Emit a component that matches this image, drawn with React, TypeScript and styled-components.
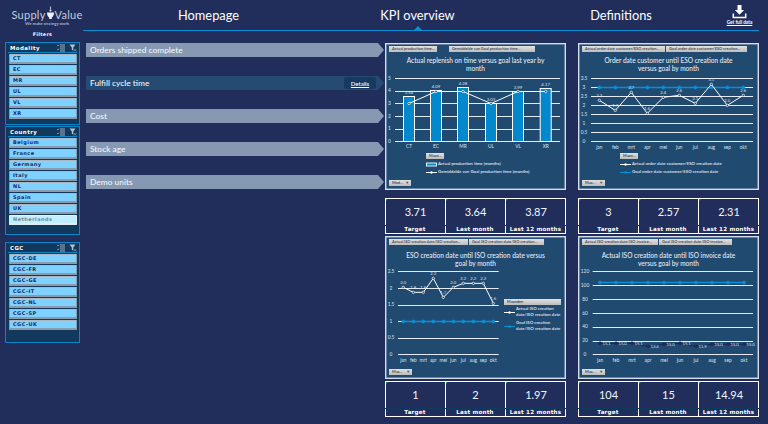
import React from "react";
import styled, { createGlobalStyle } from "styled-components";

const GlobalStyle = createGlobalStyle`
  html, body { margin: 0; padding: 0; background: #212d5a; }
  body { font-family: "Lato", "Open Sans", sans-serif; }
  * { box-sizing: border-box; }
`;

const Page = styled.div`
  width: 768px; height: 424px; overflow: hidden; display: flex; background: #212d5a;
`;
const Sidebar = styled.aside`
  width: 83px; flex: none; padding-left: 5px; display: flex; flex-direction: column;
`;
const LogoBlock = styled.div`
  height: 42px; width: 75px; display: flex; flex-direction: column; align-items: center;
`;
const LogoRow = styled.div`
  margin-top: 7px; margin-left: 9px; height: 14px; display: flex; align-items: flex-end;
  font: 400 11px/12px "Lato", sans-serif; color: #c4cede; letter-spacing: 0.25px; white-space: nowrap;
`;
const LogoTag = styled.div`
  margin-left: 9px; font: 700 4.2px/6px "Lato", sans-serif; color: #aab6cc; white-space: nowrap;
`;
const FiltersLabel = styled.div`
  margin-top: 4px; font: 700 4.8px/8px "DejaVu Sans", sans-serif; color: #fff; letter-spacing: 0.3px;
`;
const FilterPanel = styled.section<{ $mt: number; $h: number }>`
  margin-top: ${(p) => p.$mt}px; height: ${(p) => p.$h}px; width: 75px; border: 1px solid #0a86c8;
  background: #12385e; padding: 0 2px;
`;
const PanelHead = styled.div`
  height: 10px; border-bottom: 1px solid #0a86c8; display: flex; align-items: center; padding-left: 2px; gap: 4px;
`;
const PanelTitle = styled.div`
  flex: 1; font: 700 5.4px/8px "DejaVu Sans", sans-serif; color: #fff; letter-spacing: 0.45px;
`;
const ButtonList = styled.div`
  margin-top: 1px; display: flex; flex-direction: column; gap: 1px; padding: 0 0 0 1px;
`;
const SlicerButton = styled.div<{ $dim?: boolean }>`
  height: 10px; background: ${(p) => (p.$dim ? "#c3eeff" : "#7fd2ff")};
  border: 1px solid ${(p) => (p.$dim ? "#dfeef4" : "#8a9bab")}; border-top-color: ${(p) => (p.$dim ? "#e6f6fb" : "#a9b8c4")};
  border-bottom-width: 2px;
  clip-path: polygon(1px 0, calc(100% - 1px) 0, 100% 1px, 100% calc(100% - 1px), calc(100% - 1px) 100%, 1px 100%, 0 calc(100% - 1px), 0 1px);
  padding-left: 3px;
  font: 700 5px/7px "DejaVu Sans", sans-serif; letter-spacing: 0.45px;
  color: ${(p) => (p.$dim ? "#71898f" : "#1b2a58")}; white-space: nowrap;
`;
const Content = styled.main`
  flex: 1; display: flex; flex-direction: column; min-width: 0;
`;
const Nav = styled.nav`
  width: 676px; height: 31px; border-bottom: 1px solid #0a8fd6; padding-left: 21px;
  display: grid; grid-template-columns: 209px 209px 198px 1fr; position: relative;
`;
const NavItem = styled.div<{ $active?: boolean }>`
  position: relative; text-align: center; font: 400 12.8px/31px "Lato", sans-serif; color: #fff;
  ${(p) => p.$active && `
    &::after {
      content: ""; position: absolute; left: 50%; bottom: 0; margin-left: -5px;
      border-left: 5px solid transparent; border-right: 5px solid transparent; border-bottom: 5px solid #0a8fd6;
    }`}
`;
const Download = styled.div`
  display: flex; flex-direction: column; align-items: center; padding-top: 5px;
  font: 700 4.7px/6px "Lato", sans-serif; color: #fff; text-decoration: underline; white-space: nowrap;
`;
const Body = styled.div`
  margin-top: 12px; display: flex; padding-left: 3px;
`;
const Menu = styled.div`
  width: 299px; flex: none; display: flex; flex-direction: column; gap: 19px;
`;
const MenuRow = styled.div<{ $active?: boolean }>`
  width: 298px; height: 14px; display: flex; align-items: center; justify-content: space-between;
  padding: 0 8px 0 4px; background: ${(p) => (p.$active ? "#254b72" : "#8699b3")};
  clip-path: polygon(0 0, 292px 0, 100% 50%, 292px 100%, 0 100%);
  font: 500 8.4px/14px "Lato", sans-serif; color: #f1f4f8;
`;
const DetailsChip = styled.span`
  width: 32px; height: 12px; background: #183a60; border-radius: 2px; text-align: center;
  font: 500 6px/13px "Lato", sans-serif; color: #fff; text-decoration: underline;
`;
const Grid = styled.div`
  display: grid; grid-template-columns: 181px 181px; column-gap: 12px; align-content: start;
`;
const Card = styled.div<{ $gap: number }>`
  display: flex; flex-direction: column; gap: ${(p) => p.$gap}px; margin-bottom: 2px;
`;
const ChartPanel = styled.section<{ $h: number }>`
  height: ${(p) => p.$h}px; border: 1px solid #d5deea; background: #214a71; display: flex; flex-direction: column;
  box-shadow: 0 0 0 0.5px #aebfd2 inset;
`;
const ChipRow = styled.div`
  height: 6px; margin-top: 2px; padding-left: 3px; display: flex; gap: 1px;
`;
const Chip = styled.div<{ $w: number; $mr?: number }>`
  width: ${(p) => p.$w}px; margin-right: ${(p) => p.$mr ?? 0}px; height: 6px; padding-left: 3px; overflow: hidden;
  background: linear-gradient(#e2e2e2, #bdbdbd); color: #4a505e;
  font: 700 3.9px/6px "Lato", sans-serif; white-space: nowrap; flex: none;
`;
const ChartTitle = styled.h3<{ $mt: number }>`
  margin: ${(p) => p.$mt}px 0 0; height: ${(p) => 21 - p.$mt}px; text-align: center; padding: 0 8px;
  font: 500 6.55px/8px "Lato", sans-serif; color: #e6ecf4; white-space: pre-line;
`;
const PlotRow = styled.div`
  display: flex; flex: none;
`;
const Plot = styled.svg`
  display: block; flex: none;
  text { font-family: "Lato", sans-serif; fill: #dbe3ee; }
`;
const Legend = styled.div<{ $ml: number; $mt: number }>`
  margin: ${(p) => p.$mt}px 0 0 ${(p) => p.$ml}px; display: flex; flex-direction: column;
`;
const LegendRow = styled.div<{ $mt?: number }>`
  margin-top: ${(p) => p.$mt ?? 2}px; display: flex; align-items: center; gap: 1px;
  font: 600 4.4px/6px "Lato", sans-serif; color: #e3e9f1; white-space: pre-line;
`;
const FieldChip = styled.div<{ $w: number; $ml?: number; $mb?: number }>`
  flex: none; width: ${(p) => p.$w}px; height: 6px; margin-left: ${(p) => p.$ml ?? 0}px; margin-bottom: ${(p) => p.$mb ?? 0}px;
  background: linear-gradient(#e0e0e0, #bcbcbc); color: #444a58; padding: 0 2px 0 3px;
  display: flex; justify-content: space-between; align-items: center; font: 700 3.9px/6px "Lato", sans-serif;
`;
const BottomChip = styled(FieldChip)`
  margin-top: auto; margin-left: 3px; margin-bottom: 3px;
`;
const Kpis = styled.div`
  height: 36px; display: grid; grid-template-columns: 60px 60px 61px;
  border-top: 1px solid #fff; border-bottom: 1px solid #fff; border-right: 1px solid #fff;
`;
const KpiCell = styled.div`
  position: relative; display: flex; flex-direction: column; border-left: 1px solid #fff;
  &::before {
    content: ""; position: absolute; left: 0; top: 0;
    border-top: 2px solid #2d9a2d; border-right: 2px solid transparent;
  }
`;
const KpiValue = styled.div`
  height: 26px; text-align: center; padding-top: 1px; font: 400 11px/24px "Lato", sans-serif; color: #eef6ff;
`;
const KpiLabel = styled.div`
  flex: 1; border-top: 1px solid #0f3a5e; text-align: center; margin-left: -1px;
  font: 700 5.6px/7px "DejaVu Sans", sans-serif; letter-spacing: 0.2px; color: #fff; white-space: nowrap;
`;

const ListIcon = () => (
  <svg width="8" height="8" viewBox="0 0 8 8" aria-hidden>
    <path d="M3 1h5M3 3h5M3 5h5M3 7h5" stroke="#c5ccd4" strokeWidth="0.8" />
    <path d="M0 1.2l1 .8 1-1.4M0 5.2l1 .8 1-1.4" stroke="#c5ccd4" strokeWidth="0.6" fill="none" />
  </svg>
);
const ClearIcon = () => (
  <svg width="8" height="8" viewBox="0 0 8 8" aria-hidden>
    <path d="M0.5 0.5h6L4.3 3.4v3.2L2.8 5.8V3.4z" fill="#b9c2cb" />
    <path d="M4.8 5l2.6 2.6M7.4 5L4.8 7.6" stroke="#7d8a96" strokeWidth="0.9" />
  </svg>
);
const LogoFlask = () => (
  <svg width="9" height="15" viewBox="0 0 9 15" aria-hidden>
    <path d="M4.5 0.5v3" stroke="#e8ecf2" strokeWidth="0.8" />
    <path d="M1 6.5h7c0 3-1.4 4.5-2.2 5v1.6H3.2v-1.6C2.4 11 1 9.5 1 6.5z" fill="#eef1f5" />
    <circle cx="4.5" cy="4.6" r="1" fill="#eef1f5" />
  </svg>
);
const DownloadIcon = () => (
  <svg width="15" height="14" viewBox="0 0 15 14" aria-hidden>
    <path d="M5.5 0h4v5h2.6L7.5 9.8 2.9 5h2.6z" fill="#fff" />
    <path d="M1.3 8.5v4h12.4v-4" stroke="#fff" strokeWidth="1.5" fill="none" />
  </svg>
);
const Swatch = ({ kind }: { kind: "bar" | "white" | "blue" }) => (
  <svg width="11" height="5" viewBox="0 0 11 5" aria-hidden style={{ flex: "none" }}>
    {kind === "bar" ? (
      <rect x="0.5" y="1" width="10" height="3" fill="#0288cc" stroke="#fff" strokeWidth="0.9" />
    ) : (
      <>
        <path d="M0 2.5h11" stroke={kind === "white" ? "#fff" : "#0a8fd6"} strokeWidth="1" />
        <circle cx="5.5" cy="2.5" r="1.2" fill={kind === "white" ? "#fff" : "#0a8fd6"} />
      </>
    )}
  </svg>
);

type PlotConfig = {
  box: [number, number, number, number];
  gridX: [number, number];
  ticks: { label: string; y: number }[];
  tickX: number;
  cats: string[];
  catX: number[];
  catY: number;
  lines: { pts: number[]; color: string; hollow?: boolean; labels?: string[]; side?: boolean }[];
  bars?: { tops: number[]; labels: string[]; base: number };
};

const seq = (start: number, step: number, n: number) => Array.from({ length: n }, (_, i) => start + i * step);
const MONTHS = ["jan", "feb", "mrt", "apr", "mei", "jun", "jul", "aug", "sep", "okt"];
const snap = (y: number) => Math.round(y) + 0.5;

const ChartPlot = ({ c }: { c: PlotConfig }) => {
  const [x, y, w, h] = c.box;
  return (
    <Plot width={w} height={h} viewBox={`${x} ${y} ${w} ${h}`} role="img">
      {c.ticks.map((t) => (
        <g key={t.label}>
          <line x1={c.gridX[0]} x2={c.gridX[1]} y1={snap(t.y)} y2={snap(t.y)} stroke="#e4ebf3" strokeWidth="1" />
          <text x={c.tickX} y={t.y + 1.7} fontSize="4.8" textAnchor="middle">{t.label}</text>
        </g>
      ))}
      {c.bars &&
        c.bars.tops.map((top, i) => (
          <g key={i}>
            <rect x={c.catX[i] - 5.5} y={top} width="11" height={c.bars!.base - top} fill="#0288cc" stroke="#fff" strokeWidth="1" />
            <text x={c.catX[i]} y={top - 3} fontSize="4.4" textAnchor="middle">{c.bars!.labels[i]}</text>
          </g>
        ))}
      {c.lines.map((l, li) => (
        <g key={li}>
          <polyline
            points={l.pts.map((p, i) => `${c.catX[i]},${p}`).join(" ")}
            fill="none"
            stroke={l.color}
            strokeWidth={l.hollow ? 1 : 1.4}
          />
          {l.pts.map((p, i) => (
            <circle key={i} cx={c.catX[i]} cy={p} r={l.hollow ? 1.2 : 1.5} fill={l.hollow ? "#214a71" : l.color} stroke={l.color} strokeWidth="0.7" />
          ))}
          {l.labels &&
            l.labels.map((t, i) => (
              <text
                key={i}
                x={c.catX[i] + (l.side ? 2.5 : 0)}
                y={l.side ? l.pts[i] + 1.5 : l.pts[i] - 3}
                fontSize="4.2"
                textAnchor={l.side ? "start" : "middle"}
              >
                {t}
              </text>
            ))}
        </g>
      ))}
      {c.cats.map((t, i) => (
        <text key={t} x={c.catX[i]} y={c.catY} fontSize="4.8" textAnchor="middle">{t}</text>
      ))}
    </Plot>
  );
};

const chart1: PlotConfig = {
  box: [386, 74, 179, 78],
  gridX: [395, 560],
  ticks: ["5", "4", "3", "2", "1", "0"].map((label, i) => ({ label, y: 79 + i * 12.66 })),
  tickX: 389.5,
  cats: ["CT", "EC", "MR", "UL", "VL", "XR"],
  catX: [409, 436, 463, 491, 518, 545.7],
  catY: 148.5,
  bars: { tops: [97.5, 91.5, 88.5, 104.5, 92.5, 89.5], base: 142.5, labels: ["3.54", "4.09", "4.28", "3.03", "3.99", "4.17"] },
  lines: [{ pts: [104.5, 92.5, 92.5, 104.5, 92.5, 92.5], color: "#fff", hollow: true }],
};
const chart2: PlotConfig = {
  box: [579, 74, 179, 78],
  gridX: [591, 753],
  ticks: ["3.5", "3", "2.5", "2", "1.5", "1", "0.5", "0"].map((label, i) => ({ label, y: 79.3 + i * 9 })),
  tickX: 584,
  cats: MONTHS,
  catX: seq(599.3, 16, 10),
  catY: 149.5,
  lines: [
    { pts: seq(88.5, 0, 10), color: "#0a8fd6" },
    {
      pts: [199, 229, 175, 238, 190, 184, 208, 151, 214, 184].map((z) => 35 + z / 3),
      color: "#fff",
      hollow: true,
      labels: ["2.3", "1.7", "2.7", "1.6", "2.4", "2.6", "2.1", "3.1", "2.0", "2.6"],
    },
  ],
};
const chart3: PlotConfig = {
  box: [386, 268, 117, 97],
  gridX: [398, 498.7],
  ticks: ["2.5", "2", "1.5", "1", "0.5", "0"].map((label, i) => ({ label, y: 273.3 + i * 16.6 })),
  tickX: 391,
  cats: MONTHS,
  catX: seq(403.3, 10, 10),
  catY: 363.5,
  lines: [
    { pts: seq(323.5, 0, 10), color: "#0a8fd6" },
    {
      pts: [178, 193, 193, 151, 208, 178, 166, 166, 166, 226].map((z) => 230 + z / 3),
      color: "#fff",
      hollow: true,
      labels: ["2.0", "1.8", "1.8", "2.3", "1.7", "2.0", "2.2", "2.2", "2.2", "1.6"],
    },
  ],
};
const chart4: PlotConfig = {
  box: [579, 268, 179, 97],
  gridX: [592.7, 753],
  ticks: ["120", "100", "80", "60", "40", "20", "0"].map((label, i) => ({ label, y: 273.3 + i * 13.85 })),
  tickX: 585,
  cats: MONTHS,
  catX: seq(600, 16, 10),
  catY: 363.5,
  lines: [
    { pts: seq(284.5, 0, 10), color: "#0a8fd6" },
    {
      pts: [346, 346, 346, 355, 349, 346, 355, 349, 349, 349].map((z) => 230 + z / 3),
      color: "#1f2a5a",
      side: true,
      labels: ["15.1", "15.0", "15.1", "12.4", "15.0", "15.1", "11.9", "15.0", "15.0", "15.0"],
    },
  ],
};

const KpiRow = ({ values }: { values: string[] }) => (
  <Kpis>
    {["Target", "Last month", "Last 12 months"].map((l, i) => (
      <KpiCell key={l}>
        <KpiValue>{values[i]}</KpiValue>
        <KpiLabel>{l}</KpiLabel>
      </KpiCell>
    ))}
  </Kpis>
);

const Filter = ({ title, items, mt, h, dim }: { title: string; items: string[]; mt: number; h: number; dim?: string }) => (
  <FilterPanel $mt={mt} $h={h}>
    <PanelHead>
      <PanelTitle>{title}</PanelTitle>
      <ListIcon />
      <ClearIcon />
    </PanelHead>
    <ButtonList>
      {items.map((i) => (
        <SlicerButton key={i} $dim={i === dim}>{i}</SlicerButton>
      ))}
    </ButtonList>
  </FilterPanel>
);

export default function App() {
  return (
    <Page>
      <GlobalStyle />
      <Sidebar>
        <LogoBlock>
          <LogoRow>Supply<LogoFlask />Value</LogoRow>
          <LogoTag>We make strategy work</LogoTag>
          <FiltersLabel>Filters</FiltersLabel>
        </LogoBlock>
        <Filter title="Modality" mt={0} h={83} items={["CT", "EC", "MR", "UL", "VL", "XR"]} />
        <Filter title="Country" mt={1} h={109} dim="Netherlands" items={["Belgium", "France", "Germany", "Italy", "NL", "Spain", "UK", "Netherlands"]} />
        <Filter title="CGC" mt={7} h={101} items={["CGC-DE", "CGC-FR", "CGC-GE", "CGC-IT", "CGC-NL", "CGC-SP", "CGC-UK"]} />
      </Sidebar>
      <Content>
        <Nav>
          <NavItem>Homepage</NavItem>
          <NavItem $active>KPI overview</NavItem>
          <NavItem>Definitions</NavItem>
          <Download><DownloadIcon />Get full data</Download>
        </Nav>
        <Body>
          <Menu>
            <MenuRow>Orders shipped complete</MenuRow>
            <MenuRow $active>Fulfill cycle time<DetailsChip>Details</DetailsChip></MenuRow>
            <MenuRow>Cost</MenuRow>
            <MenuRow>Stock age</MenuRow>
            <MenuRow>Demo units</MenuRow>
          </Menu>
          <Grid>
            <Card $gap={8}>
              <ChartPanel $h={147}>
                <ChipRow>
                  <Chip $w={48} $mr={11}>Actual production time...</Chip>
                  <Chip $w={86}>Gemiddelde van Goal production time...</Chip>
                </ChipRow>
                <ChartTitle $mt={5}>{"Actual replenish on time versus goal last year by\nmonth"}</ChartTitle>
                <ChartPlot c={chart1} />
                <Legend $ml={40} $mt={2}>
                  <FieldChip $w={18}>Maan...</FieldChip>
                  <LegendRow $mt={2}><Swatch kind="bar" />Actual production time (months)</LegendRow>
                  <LegendRow $mt={2}><Swatch kind="white" />Gemiddelde van Goal production time (months)</LegendRow>
                </Legend>
                <BottomChip $w={22}>Mod... <span>▼</span></BottomChip>
              </ChartPanel>
              <KpiRow values={["3.71", "3.64", "3.87"]} />
            </Card>
            <Card $gap={8}>
              <ChartPanel $h={147}>
                <ChipRow>
                  <Chip $w={83}>Actual order date customer/ESO creation...</Chip>
                  <Chip $w={81}>Goal order date customer/ESO creation...</Chip>
                </ChipRow>
                <ChartTitle $mt={5}>{"Order date customer until ESO creation date\nversus goal by month"}</ChartTitle>
                <ChartPlot c={chart2} />
                <Legend $ml={41} $mt={2}>
                  <FieldChip $w={18}>Maan...</FieldChip>
                  <LegendRow $mt={2}><Swatch kind="white" />Actual order date customer/ESO creation date</LegendRow>
                  <LegendRow $mt={2}><Swatch kind="blue" />Goal order date customer/ESO creation date</LegendRow>
                </Legend>
                <BottomChip $w={23}>Maa... <span>▼</span></BottomChip>
              </ChartPanel>
              <KpiRow values={["3", "2.57", "2.31"]} />
            </Card>
            <Card $gap={2}>
              <ChartPanel $h={143}>
                <ChipRow>
                  <Chip $w={79}>Actual ISO creation date/ISO creation...</Chip>
                  <Chip $w={75}>Goal ISO creation date/ISO creation...</Chip>
                </ChipRow>
                <ChartTitle $mt={7}>{"ESO creation date until ISO creation date versus\ngoal by month"}</ChartTitle>
                <PlotRow>
                  <ChartPlot c={chart3} />
                  <Legend $ml={1} $mt={33}>
                    <FieldChip $w={57}>Maanden</FieldChip>
                    <LegendRow $mt={1}><Swatch kind="white" />{"Actual ISO creation\ndate/ISO creation date"}</LegendRow>
                    <LegendRow $mt={2}><Swatch kind="blue" />{"Goal ISO creation\ndate/ISO creation date"}</LegendRow>
                  </Legend>
                </PlotRow>
                <BottomChip $w={23}>Maa... <span>▼</span></BottomChip>
              </ChartPanel>
              <KpiRow values={["1", "2", "1.97"]} />
            </Card>
            <Card $gap={2}>
              <ChartPanel $h={143}>
                <ChipRow>
                  <Chip $w={76}>Actual ISO creation date/ISO invoice...</Chip>
                  <Chip $w={73}>Goal ISO creation date/ISO invoice...</Chip>
                </ChipRow>
                <ChartTitle $mt={7}>{"Actual  ISO creation date until ISO invoice date\nversus goal by month"}</ChartTitle>
                <ChartPlot c={chart4} />
                <BottomChip $w={23}>Maa... <span>▼</span></BottomChip>
              </ChartPanel>
              <KpiRow values={["104", "15", "14.94"]} />
            </Card>
          </Grid>
        </Body>
      </Content>
    </Page>
  );
}
